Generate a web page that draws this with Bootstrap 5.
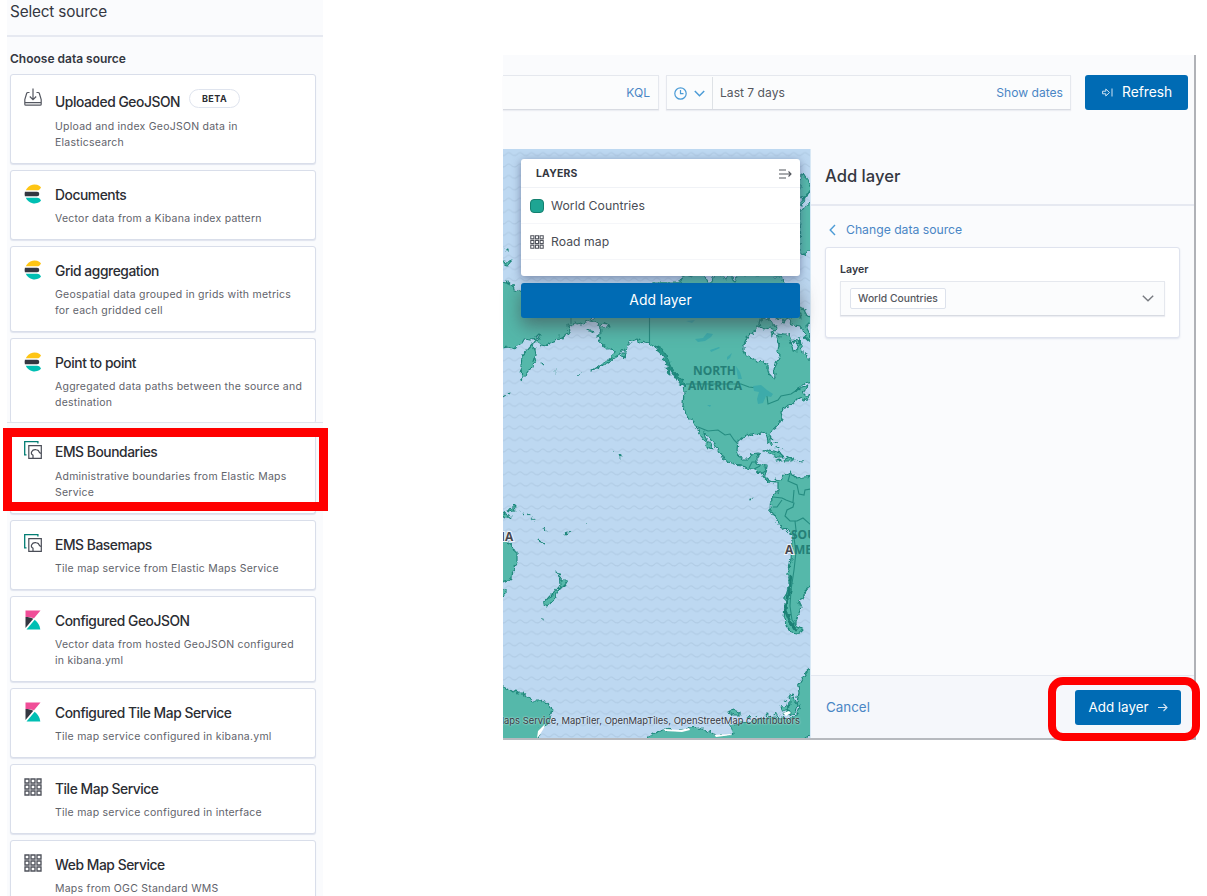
<!DOCTYPE html>
<html lang="en">
<head>
<meta charset="utf-8">
<meta name="viewport" content="width=device-width, initial-scale=1">
<title>Maps - Add layer</title>
<link rel="stylesheet" href="https://cdn.jsdelivr.net/npm/bootstrap@5.3.0/dist/css/bootstrap.min.css">
<style>
body{font-family:Inter,"Liberation Sans",sans-serif;width:1207px;height:896px;overflow:hidden;background:#fff;color:#343741}
svg{display:block;flex:none}
.stage{height:896px}
.sources{width:316px;margin-left:7px;height:896px;background:#fafbfd;overflow:hidden}
.src-head{height:37px;border-bottom:2px solid #e6e9f1;padding-left:3px;font-size:15.3px;line-height:23px;letter-spacing:-.15px}
.src-label{padding:12px 0 0 3px;height:37px;font-size:12px;line-height:19px;font-weight:600}
.src-list{padding:0 7px 0 3px;gap:6px}
.src{background:#fff;border:1px solid #d9deea;border-radius:3px;box-shadow:0 1px 1px #dfe3ee;padding:13px 0 12px 13px;gap:13px;flex:none}
.src>div{padding-top:1px}
.src h3{font-size:13.8px;line-height:20px;font-weight:500;margin:0 0 6px;letter-spacing:-.43px;color:#2b2d33;white-space:nowrap}
.src p{font-size:10.5px;line-height:16px;margin:0;letter-spacing:.24px;color:#5f636b;white-space:nowrap}
.src.tall h3{margin-top:3px;margin-bottom:7px}
.beta{font-size:9px;font-weight:700;border:1px solid #dfe4ee;border-radius:10px;height:19px;width:51px;line-height:17px;text-align:center;letter-spacing:.5px;position:relative;top:-3px;margin-left:9px}
.src.cut{border-bottom:0;height:85px;padding-bottom:0;box-shadow:none;margin-bottom:-1px}
.seam{border-top:1px solid #dfe3ec;margin:-6px -7px -6px -3px;height:6px}
.src.after{border-top:0;padding-top:13px}
.src.after p{padding-top:1px}
.redbox{position:absolute;border:9px solid #f00;left:3px;top:428px;width:325px;height:83px}
.app{margin:55px 0 0 180px;width:693px;height:685px;background:#fafbfd;border-right:2px solid #b0b2b7;border-bottom:2px solid #b6b9be}
.bar{height:94px;padding-top:20px}
.field{height:35px;border:1px solid #e5e8ee;border-bottom-color:#d8dbe2;background:#fbfcfd;font-size:12.1px;box-shadow:0 1px 1px #eceef3}
.bar .field{padding-top:1px}
.lnk{color:#4a86c5}
.bluebtn{background:#006bb4;color:#fff;border-radius:3px;height:35px;padding-bottom:1px}
.map{width:308px;height:589px;background:#bdd8f1;position:relative;border-right:1px solid #d8e8f5}
.layers{position:absolute;left:18px;top:10px;width:279px;height:117px;background:#fff;border-radius:3px;box-shadow:0 2px 8px rgba(60,70,110,.55)}
.layers .hd{height:29px;font-size:10.4px;font-weight:700;letter-spacing:.2px;padding:1px 8px 0 15px;border-bottom:1px solid #f0f2f6}
.layers .rw{height:36px;font-size:12.2px;border-bottom:1px solid #f5f6f9;padding:1px 0 0 9px;letter-spacing:.05px;color:#4a4d55}
.sw{width:14px;height:14px;border-radius:4px;background:#1ea593;border:1px solid #14806f;margin-right:7px}
.mapbtn{position:absolute;left:18px;top:134px;width:279px;font-size:13.9px;box-shadow:0 8px 18px rgba(60,60,70,.55)}
.attr{position:absolute;right:10px;bottom:10px;font-size:9.4px;line-height:14px;white-space:nowrap;color:#343741;text-shadow:0 0 2px #fff}
.attrwrap{position:absolute;inset:0;overflow:hidden}
.fly-h{height:57px;border-bottom:2px solid #e6e9f1;padding-left:14px;font-size:16.6px;line-height:55px;font-weight:500}
.back{height:41px;padding:15px 0 0 18px;font-size:12.2px;line-height:18px}
.fcard{margin:0 14px;height:91px;border:1px solid #dfe3ee;background:#fff;border-radius:3px;box-shadow:0 1px 2px #dfe3ee;padding:13px 14px}
.fcard label{font-size:10.6px;font-weight:600;line-height:18px;display:block;margin-bottom:2px}
.pill{border:1px solid #dde2ec;background:#fff;border-radius:2px;height:21px;width:96px;font-size:10.3px;line-height:19px;text-align:center;font-weight:500;color:#55575e}
.fly-f{height:63px;background:#f5f7fb;border-top:1px solid #e4e8f0;padding:1px 13px 0 15px;font-size:13.4px}
.redround{position:absolute;left:1048px;top:677px;width:152px;height:64px;border:8px solid #f00;border-radius:15px}
</style>
</head>
<body>
<svg width="0" height="0" class="position-absolute">
<defs>
<symbol id="es" viewBox="0 0 18 20"><path d="M1.8 6.3A9.3 9.3 0 0 1 17 3.2C16.4 5.2 15 6.3 13 6.3z" fill="#fec514"/><path d="M.9 7.800h12.200a2 2 0 0 1 0 4.400H.9a9 9 0 0 1 0-4.400z" fill="#343741"/><path d="M1.800 13.700H13c2 0 3.400 1 4 3A9.300 9.300 0 0 1 1.800 13.700z" fill="#00bfb3"/></symbol>
<symbol id="kb" viewBox="0 0 16 20"><path d="M.5.500h15L9 8.300C6.500 7.400 3.500 7 .5 7z" fill="#f04e98"/><path d="M.5 7c3 0 5.400.5 7.800 1.700L.5 18z" fill="#343741"/><path d="M9.700 9.800C12.800 12 14.800 15.500 15.300 19.500H1.500z" fill="#00bfb3"/></symbol>
<symbol id="ems" viewBox="0 0 18 18"><path d="M2.500 13.800H.7V.7h13.200v1.800" fill="none" stroke="#017d73" stroke-width="1.300"/><path d="M4.800 4.700h12.500v12.600H4.800z" fill="none" stroke="#4a4d57" stroke-width="1.200"/><path d="M9 17v-2.800c-1.600-.7-2-2-1.300-3.500.8-1.600 2.500-2.400 4.500-2 1.700.3 2.800 1.300 3.300 2.800L17 12.500" fill="none" stroke="#4a4d57" stroke-width="1.200"/></symbol>
<symbol id="grid" viewBox="0 0 18 18"><g fill="none" stroke="#4f525b" stroke-width="1.350"><path d="M1 1h4v4H1zM7 1h4v4H7zM13 1h4v4h-4z"/><path d="M1 7h4v4H1zM7 7h4v4H7zM13 7h4v4h-4z"/><path d="M1 13h4v4H1zM7 13h4v4H7zM13 13h4v4h-4z"/></g></symbol>
</defs></svg>
<main class="stage d-flex position-relative">
<section class="sources d-flex flex-column">
<div class="src-head flex-shrink-0">Select source</div>
<div class="src-label flex-shrink-0">Choose data source</div>
<div class="src-list d-flex flex-column">
 <article class="src tall d-flex"><svg width="18" height="20" viewBox="0 0 18 20"><path d="M5.500 4.500H3.800c-.6 0-.9.300-1.100.8L.8 11.500v4.700c0 .6.400 1 1 1h14.400c.6 0 1-.4 1-1v-4.700l-1.900-6.200c-.2-.5-.5-.8-1.100-.8h-1.700M1 14.700h16M9 .5v11M5.800 8.500L9 11.700l3.200-3.200" fill="none" stroke="#555861" stroke-width="1.200"/></svg><div><h3 class="d-flex">Uploaded GeoJSON<span class="beta">BETA</span></h3><p>Upload and index GeoJSON data in<br>Elasticsearch</p></div></article>
 <article class="src d-flex"><svg width="18" height="20"><use href="#es"/></svg><div><h3>Documents</h3><p>Vector data from a Kibana index pattern</p></div></article>
 <article class="src d-flex"><svg width="18" height="20"><use href="#es"/></svg><div><h3>Grid aggregation</h3><p>Geospatial data grouped in grids with metrics<br>for each gridded cell</p></div></article>
 <article class="src cut d-flex"><svg width="18" height="20"><use href="#es"/></svg><div><h3>Point to point</h3><p>Aggregated data paths between the source and<br>destination</p></div></article>
 <div class="seam"></div>
 <article class="src after d-flex"><svg width="18" height="18"><use href="#ems"/></svg><div><h3>EMS Boundaries</h3><p>Administrative boundaries from Elastic Maps<br>Service</p></div></article>
 <article class="src d-flex"><svg width="18" height="18"><use href="#ems"/></svg><div><h3>EMS Basemaps</h3><p>Tile map service from Elastic Maps Service</p></div></article>
 <article class="src d-flex"><svg width="18" height="20"><use href="#kb"/></svg><div><h3>Configured GeoJSON</h3><p>Vector data from hosted GeoJSON configured<br>in kibana.yml</p></div></article>
 <article class="src d-flex"><svg width="18" height="20"><use href="#kb"/></svg><div><h3>Configured Tile Map Service</h3><p>Tile map service configured in kibana.yml</p></div></article>
 <article class="src d-flex"><svg width="18" height="18"><use href="#grid"/></svg><div><h3>Tile Map Service</h3><p>Tile map service configured in interface</p></div></article>
 <article class="src d-flex"><svg width="18" height="18"><use href="#grid"/></svg><div><h3>Web Map Service</h3><p>Maps from OGC Standard WMS</p></div></article>
</div>
</section>
<div class="redbox"></div>

<section class="app d-flex flex-column">
<div class="bar d-flex">
 <div class="field border-start-0 d-flex align-items-center justify-content-end lnk pe-2" style="width:156px">KQL</div>
 <div class="field d-flex align-items-center" style="width:405px;margin-left:7px">
  <div class="d-flex align-items-center h-100 border-end" style="width:46px;padding-left:7px;gap:7px"><svg width="13" height="13" viewBox="0 0 13 13" fill="none" stroke="#4b9bd6" stroke-width="1.200"><circle cx="6.500" cy="6.500" r="5.700"/><path d="M6.500 3v3.700h3"/></svg><svg width="11" height="7" viewBox="0 0 11 7" fill="none" stroke="#4b9bd6" stroke-width="1.500"><path d="M.8 1l4.700 4.700L10.200 1"/></svg></div>
  <span style="color:#55575e;margin-left:7px">Last 7 days</span><span class="ms-auto lnk pe-2" style="margin-right:-1px">Show dates</span>
 </div>
 <div class="bluebtn d-flex align-items-center" style="width:103px;margin-left:14px;padding-left:17px;gap:9px;font-size:13.8px"><svg width="11" height="9" viewBox="0 0 11 9" fill="none" stroke="#cfe3f3" stroke-width="1"><path d="M.6 3.200h3.200V1l3.700 3.500L3.800 8V5.800H.6zM10 .5v8"/></svg><span>Refresh</span></div>
</div>
<div class="d-flex">
<div class="map flex-shrink-0">
<svg width="307" height="589" viewBox="503 149 307 589">
<defs><pattern id="wv" width="11.400" height="11.400" x="503" y="147" patternUnits="userSpaceOnUse"><path d="M-1 8.500Q1.500 8.800 3 7.200T5.700 5.600T8.500 7.200T12.400 8.500" fill="none" stroke="#b1cce5" stroke-width="1.200"/></pattern>
<filter id="coast" x="490" y="140" width="335" height="615" filterUnits="userSpaceOnUse"><feTurbulence type="fractalNoise" baseFrequency=".22" numOctaves="2" seed="4" result="n"/><feDisplacementMap in="SourceGraphic" in2="n" scale="6" xChannelSelector="R" yChannelSelector="G"/></filter></defs>
<rect x="503" y="149" width="308" height="591" fill="url(#wv)"/>
<g fill="#54b8aa" stroke="#1f877b" stroke-width="1.200" stroke-linejoin="round" filter="url(#coast)">
<path d="M498 281L506 283 508 281 509 284 513 285 514 290 518 291 521 292 530 296 580 298 590 312 592 320 586 322 577 325 575 322 573 325 568 324 569 333 566 334 564 338 560 336 555 342 549 344 546 346 541 345 538 343 540 336 539 334 536 337 533 346 535 349 536 355 534 362 533 366 528 371 525 376 522 380 521 367 522 356 527 350 532 344 536 342 538 338 530 339 525 338 522 343 518 345 515 349 510 347 498 348Z"/>
<path d="M640 300L650 283H680L682 277 686 275 692 277 694 273 700 272 705 276 707 283 712 283 714 273 722 274 726 280 729 275 733 278 735 283 738 273 745 276 750 273 758 276 766 273 775 276 782 276 784 283 780 295 772 305 766 316 760 319 760 326 756 328 753 334 748 335 744 344 744 351 746 355 752 358 757 361 763 362 768 364 768 371 770 376 774 378 775 375 774 368 777 362 780 356 778 351 779 344 777 338 778 333 784 334 788 334 791 340 793 350 796 351 799 343 800 338 802 352 806 355 808 359 816 361V382L803 384 795 392 802 388 808 386 803 393 806 396 812 394 808 399 802 400 800 397 795 402 791 405 786 407 781 412 782 418 779 424 772 430 769 434 770 438 773 443 771 446 768 441 766 434 761 433 756 435 751 434 748 436 743 437 738 441 737 450 739 455 743 460 748 460 751 454 758 453 759 456 757 459 757 464 760 465 767 466 766 472 765 476 769 480 773 482 776 479 781 480 784 475 789 473 791 472 793 475 796 478 803 477 816 476V582L805 591 803 599 799 601 801 607 799 613 796 620 796 625 803 629 801 631 797 634 792 633 787 628 784 619 785 606 785 598 788 588 788 575 791 559 792 540 792 535 785 529 780 526 776 518 770 509 771 501 774 495 778 490 778 483 774 483 768 482 762 475 755 470 747 468 742 465 734 464 723 459 721 453 714 444 707 435 704 431 705 437 709 443 713 449 709 448 705 441 701 436 698 428 692 422 686 414 683 405 684 392 683 386 679 379 674 372 671 365 665 356 660 350 655 347 649 344 640 342 637 339 630 342 627 347 625 354 623 349 618 356 613 359 607 364 601 366 592 371 603 363 611 358 615 351 610 350 607 347 600 343 598 336 601 331 599 328 603 328 610 326 606 322 600 327 597 322 593 320 595 315 610 300Z"/>
<path d="M801 175L805 176 808 180 811 186V190L805 199 799 196ZM799 202L807 197 804 202 800 206ZM800 213L806 205 816 201V252L807 251 804 255 799 252Z"/>
<path d="M776 317H801L796 306 803 308 806 314 811 317 812 324 808 323 806 327 810 334 812 343 806 338 803 330 800 326 793 325 788 319 783 322ZM760 320L766 317 771 321 774 326 777 327 775 330 770 328 764 330 761 327 758 326ZM771 332L774 331 775 334 772 336ZM776 335H779L780 338 777 337ZM793 340L797 341 800 343 797 345Z"/>
<path d="M498 260L507 262 512 260 508 265 498 262ZM506 249h2v1h-2zM502 398l5-3M509 394l1-1M541 363l2 2M555 371l1 1M576 375l3-1M580 374l2-1M587 330l5 0 1 2-4 0zM622 353l4 0-1 4-4-1z"/>
<path d="M656 346L662 349 667 356 670 364 673 372 675 377 672 372 667 364 663 358ZM666 367l3 2 1 5-3-2zM674 373L682 380 686 387 679 383Z" fill="#2b988a"/>
<path d="M774 442l3 1M777 446l1 3M782 447h1M763 452L768 450 774 451 780 453 784 457 777 457 770 453ZM784 460L789 457 795 460 792 461 784 461ZM777 460h4v1h-4zM798 460l4 1"/>
<path d="M498 511L506 514 511 518 505 518 502 516ZM507 510L513 508 513 504 516 507 514 510 509 511ZM520 510l1 1M523 513l2 2M528 514l1 2M531 518l3 2M544 528l2 3M538 540l6 4-2-1zM565 535l2-3 1 1-2 2zM569 532l2-1M586 525h1M612 452h1M616 453h1M619 455l2 1 0 2-1-1zM750 498h1v2h-1z"/>
<path d="M498 538L506 540 510 544 513 549 517 552 517 562 514 570 511 575 509 580 498 583ZM498 589h8l0 4-4 4z"/>
<path d="M556 572L560 578 563 580 568 580 565 585 560 590 559 587 561 583 560 577ZM557 588L559 590 556 596 552 602 547 606 543 604 548 598 554 592ZM542 618h1v1h-1z"/>
<path d="M498 687L505 687 506 690 509 689 513 692 516 690 518 694 523 694 529 698 533 701 540 701 545 702 549 705 552 709 551 714 549 722 543 726 539 733 537 745H498Z"/>
<path d="M640 743L654 734 663 729 680 730 689 728 698 727 706 731 715 735 733 734 730 725 740 723 750 722 765 718 776 717 786 719 797 716 800 708 797 702 799 693 798 686 801 681 807 671 816 664V730L808 736 800 745H640Z"/>
<path d="M728 712L734 710 740 712 740 715 733 715ZM748 716l3 2M754 716l2 1M765 715l2-2 3 3M775 715l1-2 3 3M781 706L787 705 788 710 782 710ZM789 695L792 694 794 700 798 705 796 713 790 715 788 709 790 704ZM784 700l3 1M783 714L789 711 791 713 786 715Z"/>
</g>
<g fill="none" stroke="#258c80" stroke-width="1.100">
<path d="M571 300V324M649.500 300V345M686 384H741L749 387 757 388 763 392 767 396 768 404 778 400 781 396 791 394 797 390M698 427L708 431 718 430 725 435 730 434 734 440 738 444M749 468L752 462 757 462M754 469L760 466M761 474L767 470M790 474L788 481 797 485 799 494 804 495 805 490 811 489M773 497L782 498 786 500 794 503 793 507 787 510 785 516 790 521 797 521 803 518 811 525M782 500L777 507 773 507M793 502L794 490M795 521L796 530 794 538 796 552 794 570 791 590 790 606 792 620 796 625"/>
</g>
<path d="M787 601L786 612 790 622 797 631M791 575L788 600" fill="none" stroke="#1d8176" stroke-width="2.800" filter="url(#coast)"/>
<g fill="#3dabaa"><path d="M695 339l8-1 4-5 6 1-2 3-6 4-7 1zM710 350l9-3 1 1-9 4zM727 357l5-4-2 5-3 2zM736 366l4 6 2 7-4 0zM753 386l8-1 6 5 6 4-2 3-5-1-3 7-5 1-1-5 2-7-5-1zM686 321l9-1-3 3zM707 405l4 0-1 2z"/></g>
<g fill="#fff"><path d="M537 738L538 731 545 724 544 728 539 736ZM664 729L680 730 689 728 690 730 682 732 665 731ZM712 732L714 735 730 734 732 735 716 737ZM783 713L789 711 791 713 786 716Z"/></g>
<path d="M715 734L720 727 728 724 730 726 733 733Z" fill="#bfd8f0"/>
<g font-family="Open Sans,Noto Sans,sans-serif" font-weight="700" font-size="12" fill="#257f77"><text x="693" y="375" textLength="43">NORTH</text><text x="688" y="389.500" textLength="54">AMERICA</text><text x="791" y="539">SOU</text></g>
<g font-family="Open Sans,Noto Sans,sans-serif" font-weight="700" font-size="12" fill="#47474f" stroke="#edf3fa" stroke-width="2" paint-order="stroke"><text x="501" y="540.500">IA</text><text x="785" y="553.500">A</text></g>
<text x="794" y="553.500" font-family="Open Sans,Noto Sans,sans-serif" font-weight="700" font-size="12" fill="#257f77">ME</text>
</svg>
<div class="attrwrap"><div class="attr">Elastic Maps Service, MapTiler, OpenMapTiles, OpenStreetMap contributors</div></div>
<div class="bluebtn mapbtn d-flex align-items-center justify-content-center">Add layer</div>
<div class="layers">
 <div class="hd d-flex align-items-center justify-content-between"><span>LAYERS</span><svg width="14" height="10" viewBox="0 0 14 10" fill="none" stroke="#55585f" stroke-width="1.100"><path d="M1 1h7M1 5h12M1 9h7M10.500 2.500L13 5l-2.500 2.500"/></svg></div>
 <div class="rw d-flex align-items-center"><span class="sw"></span>World Countries</div>
 <div class="rw d-flex align-items-center"><svg width="14" height="14" style="margin-right:7px"><use href="#grid"/></svg>Road map</div>
</div>
</div>
<div class="d-flex flex-column flex-grow-1">
 <div class="fly-h">Add layer</div>
 <div class="back lnk d-flex align-items-start"><svg width="7" height="12" viewBox="0 0 7 12" style="margin:3px 10px 0 0" fill="none" stroke="#4b9bd6" stroke-width="1.400"><path d="M6 1L1.200 6 6 11"/></svg><span>Change data source</span></div>
 <div class="fcard"><label>Layer</label><div class="field d-flex align-items-center justify-content-between" style="padding:0 10px 0 9px"><span class="pill">World Countries</span><svg width="12" height="7" viewBox="0 0 12 7" fill="none" stroke="#777a80" stroke-width="1.400"><path d="M.8.8L6 5.800 11.200.8"/></svg></div></div>
 <div class="fly-f mt-auto d-flex align-items-center justify-content-between"><span class="lnk">Cancel</span><span class="bluebtn d-flex align-items-center justify-content-center" style="width:106px;gap:9px">Add layer<svg width="10" height="9" viewBox="0 0 10 9" fill="none" stroke="#d4e5f4" stroke-width="1.100"><path d="M0 4.500h9M5.500 1L9 4.500 5.500 8"/></svg></span></div>
</div>
</div>
</section>
<div class="redround"></div>
</main>
<script src="https://cdn.jsdelivr.net/npm/bootstrap@5.3.0/dist/js/bootstrap.bundle.min.js"></script>
</body>
</html>
